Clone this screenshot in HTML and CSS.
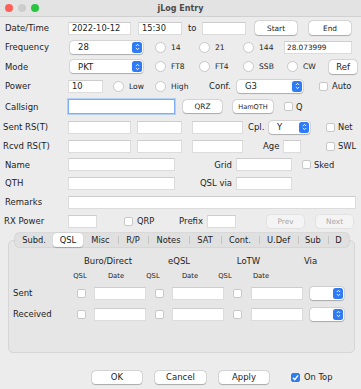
FILE: index.html
```html
<!DOCTYPE html>
<html lang="en">
<head>
  <meta charset="UTF-8" />
  <title>jLog Entry</title>
  <link rel="stylesheet" href="styles.css">
</head>
<body>
  <div class="window">
    <div class="titlebar">
      <div class="lights">
        <span class="light close"></span>
        <span class="light mini"></span>
        <span class="light zoom"></span>
      </div>
      <div class="title">jLog Entry</div>
      <div></div>
    </div>

    <div class="form">
      <div class="row h18">
        <span class="lbl">Date/Time</span>
        <span class="field w63">2022-10-12</span>
        <span class="field w44 ml7">15:30</span>
        <span class="to">to</span>
        <span class="field w44"></span>
        <span class="btn sm w42 ml9">Start</span>
        <span class="btn sm w42 ml12">End</span>
      </div>

      <div class="row h20">
        <span class="lbl wide">Frequency</span>
        <span class="sel w73">28<span class="arr"><svg viewBox="0 0 6 9" width="5" height="8"><path d="M1 3.3 3 1.3 5 3.3M1 5.7 3 7.7 5 5.7" fill="none" stroke="#fff" stroke-width="1.1"/></svg></span></span>
        <span class="radio w44 ml12">14</span>
        <span class="radio w44">21</span>
        <span class="radio w41">144</span>
        <span class="field w68 tiny">28.073999</span>
      </div>

      <div class="row h19">
        <span class="lbl wide">Mode</span>
        <span class="sel w73">PKT<span class="arr"><svg viewBox="0 0 6 9" width="5" height="8"><path d="M1 3.3 3 1.3 5 3.3M1 5.7 3 7.7 5 5.7" fill="none" stroke="#fff" stroke-width="1.1"/></svg></span></span>
        <span class="radio w44 ml12">FT8</span>
        <span class="radio w44">FT4</span>
        <span class="radio w44">SSB</span>
        <span class="radio w42">CW</span>
        <span class="btn tall w28">Ref</span>
      </div>

      <div class="row h20">
        <span class="lbl">Power</span>
        <span class="field w35">10</span>
        <span class="radio w42 ml10">Low</span>
        <span class="radio w54">High</span>
        <span class="txt w28">Conf.</span>
        <span class="sel w66">G3<span class="arr"><svg viewBox="0 0 6 9" width="5" height="8"><path d="M1 3.3 3 1.3 5 3.3M1 5.7 3 7.7 5 5.7" fill="none" stroke="#fff" stroke-width="1.1"/></svg></span></span>
        <span class="chk ml16"></span>
        <span class="cl ml4">Auto</span>
      </div>

      <div class="row h21">
        <span class="lbl">Callsign</span>
        <span class="field w107 focus"></span>
        <span class="btn sm w39 ml8">QRZ</span>
        <span class="btn sm xs w40 ml11">HamQTH</span>
        <span class="chk ml11"></span>
        <span class="cl ml3">Q</span>
      </div>

      <div class="row h20">
        <span class="lbl tight">Sent RS(T)</span>
        <span class="field w63"></span>
        <span class="field w45 ml6"></span>
        <span class="field w51 ml10"></span>
        <span class="txt w21 ml5">Cpl.</span>
        <span class="sel w41">Y<span class="arr"><svg viewBox="0 0 6 9" width="5" height="8"><path d="M1 3.3 3 1.3 5 3.3M1 5.7 3 7.7 5 5.7" fill="none" stroke="#fff" stroke-width="1.1"/></svg></span></span>
        <span class="chk ml16"></span>
        <span class="cl ml3">Net</span>
      </div>

      <div class="row h18">
        <span class="lbl tight">Rcvd RS(T)</span>
        <span class="field w63"></span>
        <span class="field w45 ml6"></span>
        <span class="field w51 ml10"></span>
        <span class="txt w20 ml20">Age</span>
        <span class="field w18"></span>
        <span class="chk ml25"></span>
        <span class="cl ml3">SWL</span>
      </div>

      <div class="row h19">
        <span class="lbl">Name</span>
        <span class="field w107"></span>
        <span class="rlbl w57">Grid</span>
        <span class="field w56 ml4"></span>
        <span class="chk ml10"></span>
        <span class="cl ml3">Sked</span>
      </div>

      <div class="row h18">
        <span class="lbl">QTH</span>
        <span class="field w107"></span>
        <span class="rlbl w57">QSL via</span>
        <span class="field w56 ml4"></span>
      </div>

      <div class="row h20">
        <span class="lbl">Remarks</span>
        <span class="field w288"></span>
      </div>

      <div class="row h18">
        <span class="lbl rx">RX Power</span>
        <span class="field w29"></span>
        <span class="chk ml27"></span>
        <span class="cl w40 ml4">QRP</span>
        <span class="rlbl w26">Prefix</span>
        <span class="field w29 ml4"></span>
        <span class="btn sm off w37 ml31">Prev</span>
        <span class="btn sm off w37 ml12">Next</span>
      </div>
    </div>

    <div class="tabs">
      <span class="tab t38">Subd.</span>
      <span class="tab t30 on">QSL</span>
      <span class="tab t35">Misc</span>
      <span class="tab t30 sep">R/P</span>
      <span class="tab t41 sep">Notes</span>
      <span class="tab t32 sep">SAT</span>
      <span class="tab t38 sep">Cont.</span>
      <span class="tab t39 sep">U.Def</span>
      <span class="tab t30 sep">Sub</span>
      <span class="tab t21 sep">D</span>
    </div>

    <div class="panel">
      <div class="row h14">
        <span class="hd w60 ml69">Buro/Direct</span>
        <span class="hd w40 ml21">eQSL</span>
        <span class="hd w41 ml29">LoTW</span>
        <span class="hd w31 ml26">Via</span>
      </div>
      <div class="row h12 sub-row">
        <span class="sub ml56">QSL</span>
        <span class="sub ml6">Date</span>
        <span class="sub ml7">QSL</span>
        <span class="sub ml7">Date</span>
        <span class="sub ml5">QSL</span>
        <span class="sub ml6">Date</span>
      </div>
      <div class="row h14 sent-row">
        <span class="plbl">Sent</span>
        <span class="chk"></span>
        <span class="field w52 ml8"></span>
        <span class="chk ml9"></span>
        <span class="field w52 ml8"></span>
        <span class="chk ml9"></span>
        <span class="field w52 ml9"></span>
        <span class="sel w34 ml7"><span class="arr"><svg viewBox="0 0 6 9" width="5" height="8"><path d="M1 3.3 3 1.3 5 3.3M1 5.7 3 7.7 5 5.7" fill="none" stroke="#fff" stroke-width="1.1"/></svg></span></span>
      </div>
      <div class="row h14 rcvd-row">
        <span class="plbl">Received</span>
        <span class="chk"></span>
        <span class="field w52 ml8"></span>
        <span class="chk ml9"></span>
        <span class="field w52 ml8"></span>
        <span class="chk ml9"></span>
        <span class="field w52 ml9"></span>
        <span class="sel w34 ml7"><span class="arr"><svg viewBox="0 0 6 9" width="5" height="8"><path d="M1 3.3 3 1.3 5 3.3M1 5.7 3 7.7 5 5.7" fill="none" stroke="#fff" stroke-width="1.1"/></svg></span></span>
      </div>
    </div>

    <div class="row h14 actions">
      <span class="btn w50 ml92">OK</span>
      <span class="btn w51 ml13">Cancel</span>
      <span class="btn w50 ml13">Apply</span>
      <span class="chk on ml22"><svg viewBox="0 0 9 9" width="9" height="9"><path d="M2 4.7 3.8 6.6 7.1 2.4" fill="none" stroke="#fff" stroke-width="1.4"/></svg></span>
      <span class="cl ml4">On Top</span>
    </div>
  </div>
</body>
</html>
```

FILE: styles.css
```css
* {
  box-sizing: border-box;
}

body {
  margin: 0;
  background: #ececec;
  font-family: "DejaVu Sans", sans-serif;
  color: #1d1d1d;
}

.window {
  width: 361px;
  height: 389px;
  background: #ececec;
  overflow: hidden;
}

/* title bar */
.titlebar {
  height: 17px;
  display: grid;
  grid-template-columns: 1fr auto 1fr;
  align-items: center;
  background: #e3e3e3;
  border-bottom: 1px solid #d0d0d0;
}

.lights {
  display: flex;
  gap: 5px;
  padding-left: 5px;
}

.light {
  width: 8px;
  height: 8px;
  border-radius: 50%;
}

.close { background: #fe5f57; }
.mini { background: #cdcdcd; }
.zoom { background: #29c440; }

.title {
  font-size: 8px;
  font-weight: bold;
  color: #4b4b4b;
}

/* rows */
.form {
  padding-top: 2px;
}

.row {
  display: flex;
  align-items: center;
  font-size: 8.5px;
}

.row > * { flex: none; }

.h12 { height: 12px; }
.h14 { height: 14px; }
.h18 { height: 18px; }
.h19 { height: 19px; }
.h20 { height: 20px; }
.h21 { height: 21px; }

.lbl {
  margin-left: 5px;
  width: 63px;
}

.lbl.wide { width: 65px; }
.lbl.tight { margin-left: 3px; width: 65px; }
.lbl.rx { margin-left: 4px; width: 64px; }

.rlbl {
  text-align: right;
}

.to {
  margin-left: 6px;
  width: 14px;
}

/* controls */
.field {
  display: flex;
  align-items: center;
  height: 13px;
  padding-left: 3px;
  background: #fff;
  border: 1px solid #dcdcdc;
  border-top-color: #cdcdcd;
  font-size: 8.3px;
}

.field.tiny {
  font-size: 7.3px;
  padding-left: 2px;
}

.field.focus {
  height: 15px;
  border: 1px solid #7daef0;
  box-shadow: 0 0 0 1px #b3d1f7;
}

.btn {
  display: flex;
  align-items: center;
  justify-content: center;
  height: 13px;
  background: #fff;
  border-radius: 3.5px;
  box-shadow: 0 0 0 0.5px rgba(0, 0, 0, 0.16), 0 0.5px 1px rgba(0, 0, 0, 0.22);
}

.btn.sm { font-size: 7.4px; }
.btn.xs { font-size: 6.6px; }
.btn.tall { height: 14px; font-size: 8.5px; }
.btn.sm.w42 { height: 14px; }

.btn.off {
  background: #f4f4f4;
  color: #a9a9a9;
  box-shadow: 0 0 0 0.5px rgba(0, 0, 0, 0.08);
}

.sel {
  display: flex;
  align-items: center;
  height: 13px;
  padding-left: 8px;
  background: #fff;
  border-radius: 3px;
  box-shadow: 0 0 0 0.5px rgba(0, 0, 0, 0.16), 0 0.5px 1px rgba(0, 0, 0, 0.2);
}

.arr {
  display: flex;
  align-items: center;
  justify-content: center;
  width: 10px;
  height: 11px;
  margin-left: auto;
  margin-right: 1px;
  background: #2f7bf5;
  border-radius: 2.5px;
}

.radio {
  display: flex;
  align-items: center;
  font-size: 7.6px;
}

.radio::before {
  content: "";
  width: 9px;
  height: 9px;
  margin-right: 5px;
  border-radius: 50%;
  background: #fff;
  border: 1px solid #c8c8c8;
}

.chk {
  display: flex;
  width: 9px;
  height: 9px;
  background: #fff;
  border: 1px solid #c8c8c8;
  border-radius: 2px;
}

.chk.on {
  background: #2f7bf5;
  border-color: #2f7bf5;
}

.chk.on svg {
  margin: -1px;
}

.cl {
  font-size: 8.3px;
}

/* tabs */
.tabs {
  position: relative;
  z-index: 1;
  display: flex;
  width: 334px;
  height: 14px;
  margin: 3px 0 -7px 15px;
  background: #e0e0e0;
  border-radius: 4px;
  box-shadow: 0 0 0 0.5px #c6c6c6;
}

.tab {
  position: relative;
  display: flex;
  align-items: center;
  justify-content: center;
  font-size: 8.3px;
}

.tab.sep::before {
  content: "";
  position: absolute;
  left: 0;
  top: 3px;
  height: 8px;
  border-left: 1px solid #c4c4c4;
}

.tab.on {
  background: #fff;
  border-radius: 3.5px;
  box-shadow: 0 0.5px 1px rgba(0, 0, 0, 0.25);
}

.t21 { width: 21px; }
.t30 { width: 30px; }
.t32 { width: 32px; }
.t35 { width: 35px; }
.t38 { width: 38px; }
.t39 { width: 39px; }
.t41 { width: 41px; }

/* tab panel */
.panel {
  width: 347px;
  height: 113px;
  margin-left: 8px;
  padding-top: 13px;
  background: #e6e6e6;
  border: 1px solid #d6d6d6;
  border-radius: 5px;
}

.hd {
  text-align: center;
  font-size: 8.5px;
}

.sub {
  width: 30px;
  text-align: center;
  font-size: 6.8px;
}

.sub-row { margin-top: 2px; }
.sent-row { margin-top: 4px; }
.rcvd-row { margin-top: 7px; }

.plbl {
  margin-left: 4px;
  width: 64px;
}

.actions {
  margin-top: 17px;
}

/* widths */
.w18 { width: 18px; }
.w20 { width: 20px; }
.w21 { width: 21px; }
.w26 { width: 26px; }
.w28 { width: 28px; }
.w29 { width: 29px; }
.w31 { width: 31px; }
.w34 { width: 34px; }
.w35 { width: 35px; }
.w37 { width: 37px; }
.w39 { width: 39px; }
.w40 { width: 40px; }
.w41 { width: 41px; }
.w42 { width: 42px; }
.w44 { width: 44px; }
.w45 { width: 45px; }
.w50 { width: 50px; }
.w51 { width: 51px; }
.w52 { width: 52px; }
.w54 { width: 54px; }
.w56 { width: 56px; }
.w57 { width: 57px; }
.w60 { width: 60px; }
.w63 { width: 63px; }
.w66 { width: 66px; }
.w68 { width: 68px; }
.w73 { width: 73px; }
.w107 { width: 107px; }
.w288 { width: 288px; }

/* left gaps */
.ml3 { margin-left: 3px; }
.ml4 { margin-left: 4px; }
.ml5 { margin-left: 5px; }
.ml6 { margin-left: 6px; }
.ml7 { margin-left: 7px; }
.ml8 { margin-left: 8px; }
.ml9 { margin-left: 9px; }
.ml10 { margin-left: 10px; }
.ml11 { margin-left: 11px; }
.ml12 { margin-left: 12px; }
.ml13 { margin-left: 13px; }
.ml16 { margin-left: 16px; }
.ml20 { margin-left: 20px; }
.ml21 { margin-left: 21px; }
.ml22 { margin-left: 22px; }
.ml25 { margin-left: 25px; }
.ml26 { margin-left: 26px; }
.ml27 { margin-left: 27px; }
.ml29 { margin-left: 29px; }
.ml31 { margin-left: 31px; }
.ml56 { margin-left: 56px; }
.ml69 { margin-left: 69px; }
.ml92 { margin-left: 92px; }
```
